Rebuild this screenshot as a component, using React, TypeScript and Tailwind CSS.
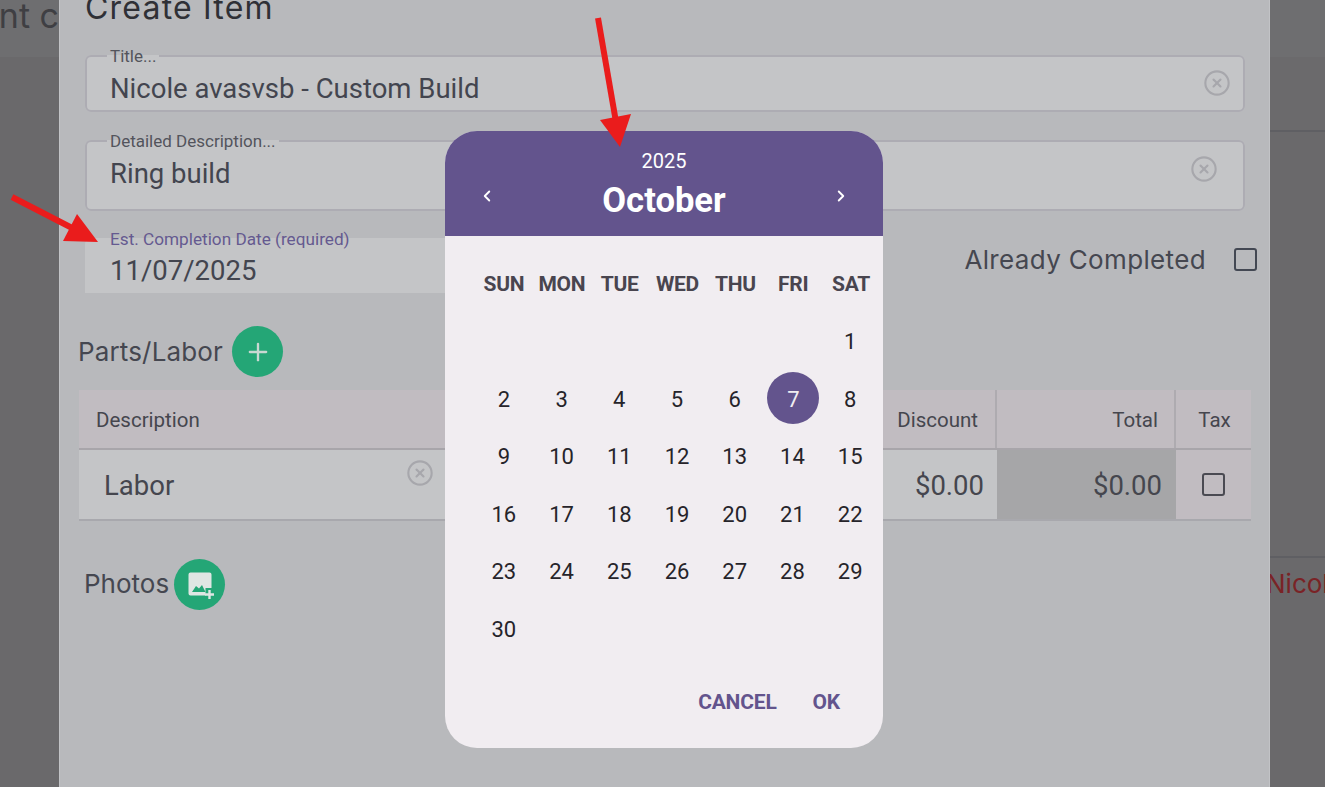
import { CircleX, ChevronLeft, ChevronRight, Plus } from "lucide-react";

const roboto = "font-['Roboto',sans-serif]";
const heading = "font-['Inter',sans-serif]";

const WEEKDAYS = ["SUN", "MON", "TUE", "WED", "THU", "FRI", "SAT"];
const DAY_ROWS = [
    ["", "", "", "", "", "", "1"],
    ["2", "3", "4", "5", "6", "7", "8"],
    ["9", "10", "11", "12", "13", "14", "15"],
    ["16", "17", "18", "19", "20", "21", "22"],
    ["23", "24", "25", "26", "27", "28", "29"],
    ["30", "", "", "", "", "", ""],
];

const ClearIcon = () => <CircleX size={28} strokeWidth={1.8} className="text-[#a7a7ac] shrink-0" />;

const OutlinedField = (props: { label: string; value: string; className: string; iconClass: string }) => {
    return <fieldset className={`${props.className} rounded-md border-2 border-[#adacb3] bg-[#c4c5c7] ${roboto}`}>
        <legend className="ml-[20px] px-[3px] text-[17px] leading-[16px] text-[#53545c]">{props.label}</legend>
        <div className="flex items-start justify-between pl-[23px]">
            <div className="pt-[9px] text-[27.5px] leading-[32px] text-[#43454f]">{props.value}</div>
            <div className={props.iconClass}><ClearIcon /></div>
        </div>
    </fieldset>
};

const GreenButton = (props: { children: React.ReactNode }) => {
    return <div className="flex h-[51px] w-[51px] shrink-0 items-center justify-center rounded-full bg-[#24a676] text-[#c9d8d2]">
        {props.children}
    </div>
};

const PhotoPlusIcon = () => {
    return <svg width="30" height="30" viewBox="0 0 30 30" aria-hidden="true">
        <path fill="#dfe6e3" d="M5.5 2.5h19a2 2 0 0 1 2 2V18h-6v7.5h-15a2 2 0 0 1-2-2v-19a2 2 0 0 1 2-2Z" />
        <path fill="#24a676" d="M7 22l4-6 3 2.5 3-3.5 3.5 7Z" />
        <path stroke="#dfe6e3" strokeWidth="2.4" d="M24.5 20v9M20 24.5h9" />
    </svg>
};

const PartsTable = () => {
    const grid = "grid grid-cols-[minmax(0,1fr)_140px_179px_75px]";
    return <div className={`${roboto} ml-[-6px] mr-[-6px] mt-[13px] text-[#45464e]`}>
        <div className={`${grid} h-[60px] border-b-2 border-[#a8a5aa] bg-[#c1bcc1] text-[20.5px]`}>
            <div className="flex items-center pl-[17px] pt-[3px]">Description</div>
            <div className="flex items-center justify-end border-r-2 border-[#aeabb0] pr-[17px] pt-[3px]">Discount</div>
            <div className="flex items-center justify-end border-r-2 border-[#aeabb0] pr-[16px] pt-[3px]">Total</div>
            <div className="flex items-center justify-center pl-[2px] pt-[3px]">Tax</div>
        </div>
        <div className={`${grid} h-[71px] border-b-2 border-[#a8a8ad] text-[27.5px]`}>
            <div className="bg-[#c4c5c7] pl-[25px]">
                <div className="flex w-[330px] items-start justify-between">
                    <span className="pt-[20px] leading-[32px]">Labor</span>
                    <span className="pt-[9px]"><ClearIcon /></span>
                </div>
            </div>
            <div className="flex items-center justify-end bg-[#c4c5c7] pr-[13px] pt-[2px]">$0.00</div>
            <div className="flex items-center justify-end bg-[#a6a6a8] pr-[14px] pt-[2px]">$0.00</div>
            <div className="flex items-center justify-center bg-[#c1bcc1]">
                <div className="h-[23px] w-[23px] rounded-[3px] border-2 border-[#4a4a52]" />
            </div>
        </div>
    </div>
};

const CreateItemModal = () => {
    return <div className="h-full w-[1211px] shrink-0 overflow-hidden border-x border-[#c2c3c6] bg-[#b8b9bc] pl-[25px] pr-[24px]">
        <div className={`flex h-[48px] items-start ${heading}`}>
            <div className="-mt-[11px] whitespace-nowrap text-[32px] leading-[38px] tracking-[1.2px] text-[#2f3036]">Create Item</div>
        </div>
        <OutlinedField className="h-[64px]" label="Title..." value="Nicole avasvsb - Custom Build" iconClass="pr-[12px] pt-[5px]" />
        <OutlinedField className="mt-[21px] h-[78px]" label="Detailed Description..." value="Ring build" iconClass="pr-[25px] pt-[6px]" />
        <div className="mt-[27px] flex h-[55px] items-start justify-between">
            <div className={`${roboto} relative h-[55px] w-[500px] rounded-t-md bg-[#c4c5c7] pl-[25px] pt-[17px] text-[27.5px] leading-[32px] text-[#43454f]`}>
                <span className="absolute left-[25px] top-[-9px] text-[17.2px] leading-[20px] text-[#655a90]">Est. Completion Date (required)</span>
                11/07/2025
            </div>
            <div className={`${heading} -mr-[12px] flex items-center gap-[28px] pt-[2px] text-[26px] tracking-[0.35px] text-[#454750]`}>
                <span>Already Completed</span>
                <div className="h-[23px] w-[23px] rounded-[3px] border-2 border-[#434853]" />
            </div>
        </div>
        <div className={`${heading} -ml-[7px] mt-[33px] flex items-center gap-[9px] text-[26px] tracking-[0.15px] text-[#454750]`}>
            <span>Parts/Labor</span>
            <GreenButton><Plus size={28} strokeWidth={2} /></GreenButton>
        </div>
        <PartsTable />
        <div className={`${heading} -ml-[1px] mt-[38px] flex items-center gap-[5px] text-[26px] text-[#454750]`}>
            <span className="-mt-[3px]">Photos</span>
            <GreenButton><PhotoPlusIcon /></GreenButton>
        </div>
    </div>
};

const DatePicker = () => {
    return <div className={`${roboto} absolute left-[445px] top-[131px] h-[617px] w-[438px] overflow-hidden rounded-[32px] bg-[#f1edf1]`}>
        <div className="relative flex h-[105px] flex-col items-center bg-[#63548d] text-white">
            <div className="mt-[18px] text-[20px] leading-[24px]">2025</div>
            <div className="mt-[3px] text-[34.6px] font-bold leading-[48px]">October</div>
            <ChevronLeft size={18} strokeWidth={2.5} className="absolute left-[33px] top-[56px]" />
            <ChevronRight size={18} strokeWidth={2.5} className="absolute left-[387px] top-[56px]" />
        </div>
        <div className="ml-[30px] mt-[30px] grid w-[405px] grid-cols-7 text-center text-[21px] font-bold leading-[36px] tracking-[-0.3px] text-[#49454f]">
            {WEEKDAYS.map((d) => <div key={d}>{d}</div>)}
        </div>
        <div className="ml-[30px] mt-[11px] w-[404px] text-[22px] text-[#26242a]">
            {DAY_ROWS.map((row, i) => <div key={i} className="grid h-[57.5px] grid-cols-7">
                {row.map((d, j) => <div key={j} className="flex items-center justify-center">
                    {d === "7"
                        ? <span className="-mt-[2px] ml-[2px] flex h-[52px] w-[52px] items-center justify-center rounded-full bg-[#63548d] pt-[2px] text-[#f1edf1]">{d}</span>
                        : d}
                </div>)}
            </div>)}
        </div>
        <div className="mt-[26px] flex justify-end gap-[36px] pr-[43px] text-[21px] font-bold leading-[36px] tracking-[-0.2px] text-[#63548d]">
            <span>CANCEL</span>
            <span>OK</span>
        </div>
    </div>
};

const Arrows = () => {
    return <svg className="pointer-events-none absolute inset-0" width="1325" height="787" viewBox="0 0 1325 787" aria-hidden="true">
        <path stroke="#ea1c1c" strokeWidth="6" d="M598 18 616 122" />
        <path fill="#ea1c1c" d="M600 120 631 114 620 147Z" />
        <path stroke="#ea1c1c" strokeWidth="6" d="M12 197 76 230" />
        <path fill="#ea1c1c" d="M77 214 63 241 98 242Z" />
    </svg>
};

export default function App() {
    return <div className="relative flex h-[787px] w-[1325px] overflow-hidden bg-[#6a696b]">
        <div className="h-full w-[59px] shrink-0 overflow-hidden">
            <div className={`${heading} flex h-[57px] w-[59px] justify-end whitespace-nowrap bg-[#6e6e70] text-[34px] leading-[32px] text-[#3f3f43]`}>
                <span>nt c</span>
            </div>
        </div>
        <CreateItemModal />
        <div className="h-full min-w-0 flex-1 overflow-hidden">
            <div className="h-[132px] border-b-2 border-[#5f5f63] bg-[#6b6a6c]">
                <div className="h-[57px] bg-[#6e6e70]" />
            </div>
            <div className="h-[426px] border-b-2 border-[#5f5f63]" />
            <div className={`${heading} -ml-[4px] whitespace-nowrap pt-[6px] text-[26px] text-[#7a2326]`}>Nicole</div>
        </div>
        <DatePicker />
        <Arrows />
    </div>
}
